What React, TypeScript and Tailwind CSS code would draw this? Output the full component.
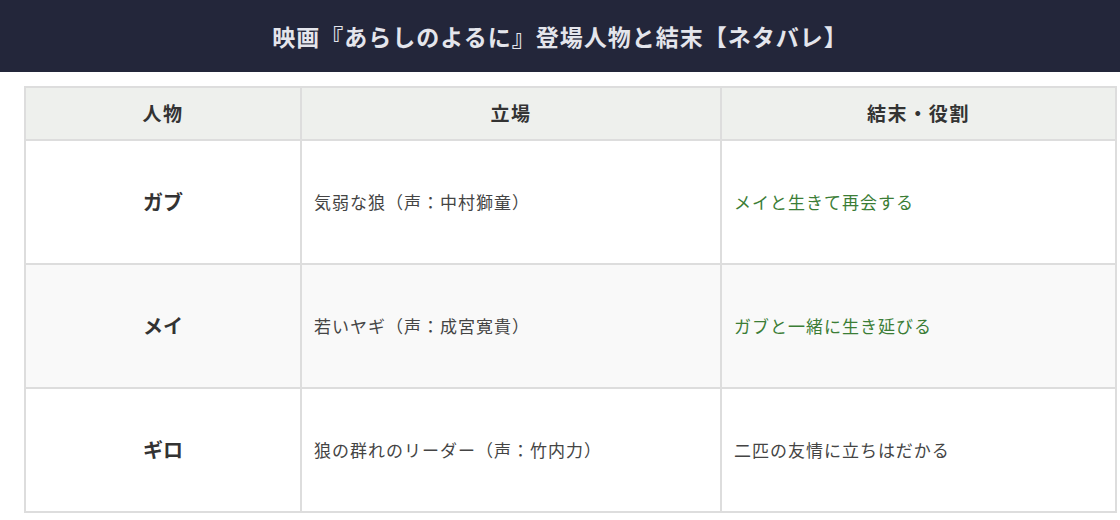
import React from "react";

const font = { fontFamily: '"Noto Sans CJK JP", "Noto Sans", sans-serif' };

const rows = [
  { name: "ガブ", role: "気弱な狼（声：中村獅童）", end: "メイと生きて再会する", green: true, bg: "bg-white" },
  { name: "メイ", role: "若いヤギ（声：成宮寛貴）", end: "ガブと一緒に生き延びる", green: true, bg: "bg-[#f9f9f9]" },
  { name: "ギロ", role: "狼の群れのリーダー（声：竹内力）", end: "二匹の友情に立ちはだかる", green: false, bg: "bg-white" },
];

export default function App() {
  return (
    <div className="w-[1120px] h-[520px] bg-white overflow-hidden" style={font}>
      <div className="h-[72px] bg-[#23263a] flex items-center justify-center">
        <h1 className="text-[23px] font-bold text-[#e4e5ec] tracking-[1px]">
          映画『あらしのよるに』登場人物と結末【ネタバレ】
        </h1>
      </div>
      <div className="mt-[14px] ml-[24px] w-[1093px] border-t-2 border-l-2 border-[#dddddd] grid grid-cols-[276px_420px_395px]">
        {["人物", "立場", "結末・役割"].map((h) => (
          <div
            key={h}
            className="h-[53px] bg-[#eef0ed] border-r-2 border-b-2 border-[#dddddd] flex items-center justify-center text-[19px] font-bold text-[#333333] tracking-[1.6px]"
          >
            {h}
          </div>
        ))}
        {rows.map((r) => (
          <React.Fragment key={r.name}>
            <div className={`h-[124px] ${r.bg} border-r-2 border-b-2 border-[#dddddd] flex items-center justify-center text-[20px] font-bold text-[#333333]`}>
              {r.name}
            </div>
            <div className={`h-[124px] ${r.bg} border-r-2 border-b-2 border-[#dddddd] flex items-center pl-[12px] text-[17px] text-[#444444] tracking-[1px]`}>
              {r.role}
            </div>
            <div className={`h-[124px] ${r.bg} border-r-2 border-b-2 border-[#dddddd] flex items-center pl-[12px] text-[17px] tracking-[1px] ${r.green ? "text-[#3b7d36]" : "text-[#444444]"}`}>
              {r.end}
            </div>
          </React.Fragment>
        ))}
      </div>
    </div>
  );
}
